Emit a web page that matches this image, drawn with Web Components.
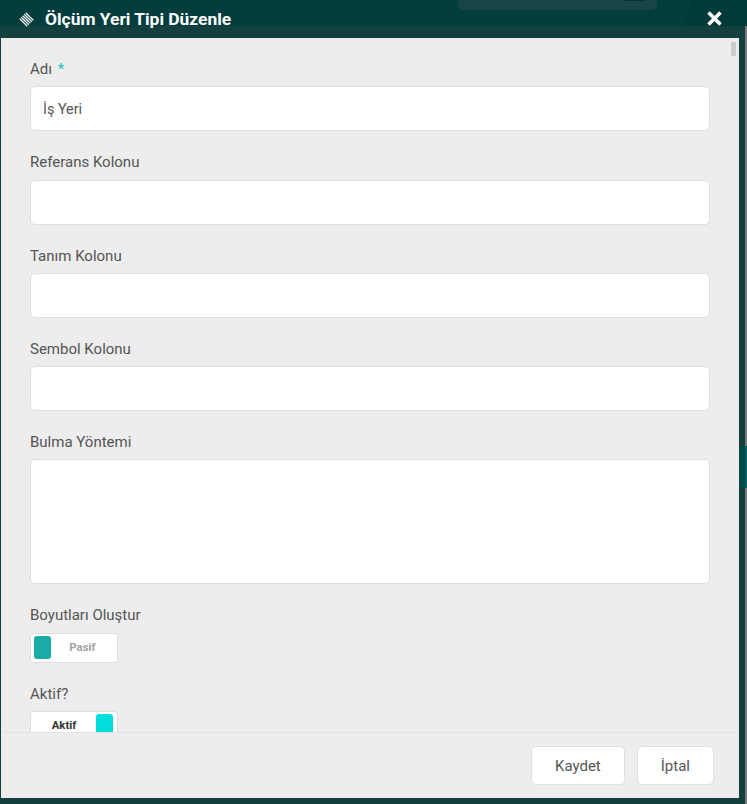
<!DOCTYPE html>
<html lang="tr">
<head>
<meta charset="utf-8">
<title>Ölçüm Yeri Tipi Düzenle</title>
<style>
html, body { margin: 0; padding: 0; height: 100%; overflow: hidden; background: #143f3f; }
body { font-family: Roboto, "Liberation Sans", sans-serif; }
</style>
</head>
<body>

<template id="tpl-dialog">
<style>
:host { display: block; position: relative; width: 747px; height: 804px; overflow: hidden; background: #143f3f; box-sizing: border-box; padding: 26px 8px 6px 1px; }
.topband { position: absolute; left: 0; top: 0; right: 0; height: 26px; background: #033d3d; }
.topband::after { content: ""; position: absolute; left: 684px; right: 0; top: 0; bottom: 0; background: #003a3a; clip-path: polygon(8px 0, 100% 0, 100% 100%, 0 100%); }
.search { position: absolute; left: 458px; top: 0; width: 199px; height: 10px; background: #174545; border-radius: 0 0 5px 5px; }
.search::after { content: ""; position: absolute; left: 166px; top: 0; width: 21px; height: 1px; background: #063232; }
.sidebar { position: absolute; right: 0; top: 26px; bottom: 0; width: 2px; background: #7d7d7d; }
.teal { position: absolute; right: 0; top: 446px; width: 8px; height: 42px; background: #004a4a; }
.teal::after { content: ""; position: absolute; right: 0; top: 0; width: 2px; height: 100%; background: #006262; }
.frame { position: relative; height: 100%; display: flex; flex-direction: column; }
.title { height: 12px; display: block; position: relative; }
.heading { position: absolute; left: 18px; top: -26px; right: 0; height: 38px; display: flex; align-items: center; gap: 11px; color: #fff; font-size: 17.4px; font-weight: 700; }
.heading svg { flex: none; }
.close { position: absolute; right: 17px; top: -15px; width: 15px; height: 15px; }
.panel { flex: 1; min-height: 0; background: #ededed; display: flex; flex-direction: column; }
.body { position: relative; flex: 1; min-height: 0; overflow: hidden; padding: 20.15px 29px 0; }
.thumb { position: absolute; right: 3px; top: 4px; width: 5px; height: 14px; background: #ccc; }
.foot { flex: none; height: 66px; box-sizing: border-box; border-top: 1px solid #e3e3e3; display: flex; justify-content: flex-end; align-items: flex-start; gap: 12px; padding: 13px 25px 0 0; }
</style>
<div class="topband"></div>
<div class="search"></div>
<div class="sidebar"></div>
<div class="teal"></div>
<div class="frame">
  <div class="title">
    <div class="heading">
      <svg width="15" height="15" viewBox="0 0 15 15" fill="none" stroke="#fff" stroke-width="1.1">
        <path d="M.75 6.75 L8.25 14.25 M2.25 5.25 L9.75 12.75 M3.75 3.75 L11.25 11.25 M5.25 2.25 L12.75 9.75 M6.75 .75 L14.25 8.25"/>
      </svg>
      <slot name="title"></slot>
    </div>
    <svg class="close" viewBox="0 0 15 15"><path d="M1.5 1.5 L13.5 13.5 M13.5 1.5 L1.5 13.5" stroke="#fff" stroke-width="3.6" fill="none"/></svg>
  </div>
  <div class="panel">
    <div class="body"><slot></slot><div class="thumb"></div></div>
    <div class="foot"><slot name="actions"></slot></div>
  </div>
</div>
</template>

<template id="tpl-field">
<style>
:host { display: block; margin-bottom: 20px; color: #555; font-size: 15px; }
.lab { display: block; height: 22px; line-height: 22px; margin-bottom: 6.25px; }
.req { color: #17c3bb; margin-left: 2px; }
.box { box-sizing: border-box; height: 45px; width: 680px; background: #fff; border: 1px solid #dedede; border-radius: 5px; padding: 0 12px; line-height: 45px; font-size: 14.4px; }
:host([tall]) .box { height: 125px; }
</style>
<span class="lab"><slot name="label"></slot><span class="req" id="req"></span></span>
<div class="box"><slot></slot></div>
</template>

<template id="tpl-toggle">
<style>
:host { display: block; margin-bottom: 20px; color: #555; font-size: 15px; }
.lab { display: block; height: 22px; line-height: 22px; margin-bottom: 6.25px; }
.sw { box-sizing: border-box; width: 88px; height: 30px; background: #fff; border: 1px solid #dedede; border-radius: 3px; padding: 2px 3px; display: flex; align-items: center; font-size: 11.4px; font-weight: 700; }
.knob { flex: none; width: 17px; height: 23px; border-radius: 3px; background: #1baaa6; }
.txt { flex: 1; text-align: center; color: #a3a3a3; padding-bottom: 2px; }
:host([on]) .sw { flex-direction: row-reverse; padding-right: 4px; }
:host([on]) .knob { background: #00dedc; }
:host([on]) .txt { color: #333; padding-right: 2px; }
</style>
<span class="lab"><slot name="label"></slot></span>
<div class="sw"><span class="knob"></span><span class="txt"><slot></slot></span></div>
</template>

<template id="tpl-button">
<style>
:host { display: block; }
button { display: block; box-sizing: border-box; height: 39px; background: #fff; border: 1px solid #e0e0e0; border-radius: 5px; font: 400 15px Roboto, "Liberation Sans", sans-serif; color: #555; padding: 0 23px; }
</style>
<button type="button"><slot></slot></button>
</template>

<edit-dialog>
  <span slot="title">Ölçüm Yeri Tipi Düzenle</span>
  <form-field required><span slot="label">Adı</span>İş Yeri</form-field>
  <form-field><span slot="label">Referans Kolonu</span></form-field>
  <form-field><span slot="label">Tanım Kolonu</span></form-field>
  <form-field><span slot="label">Sembol Kolonu</span></form-field>
  <form-field tall><span slot="label">Bulma Yöntemi</span></form-field>
  <toggle-field><span slot="label">Boyutları Oluştur</span>Pasif</toggle-field>
  <toggle-field on><span slot="label">Aktif?</span>Aktif</toggle-field>
  <action-button slot="actions">Kaydet</action-button>
  <action-button slot="actions">İptal</action-button>
</edit-dialog>

<script>
function fromTemplate(el, id) {
  el.attachShadow({ mode: 'open' })
  el.shadowRoot.appendChild(document.getElementById(id).content.cloneNode(true))
}

class EditDialog extends HTMLElement {
  constructor() { super(); fromTemplate(this, 'tpl-dialog') }
}
class FormField extends HTMLElement {
  constructor() { super(); fromTemplate(this, 'tpl-field') }
  connectedCallback() {
    if (this.hasAttribute('required')) this.shadowRoot.getElementById('req').textContent = ' *'
  }
}
class ToggleField extends HTMLElement {
  constructor() { super(); fromTemplate(this, 'tpl-toggle') }
}
class ActionButton extends HTMLElement {
  constructor() { super(); fromTemplate(this, 'tpl-button') }
}

customElements.define('edit-dialog', EditDialog)
customElements.define('form-field', FormField)
customElements.define('toggle-field', ToggleField)
customElements.define('action-button', ActionButton)
</script>
</body>
</html>
